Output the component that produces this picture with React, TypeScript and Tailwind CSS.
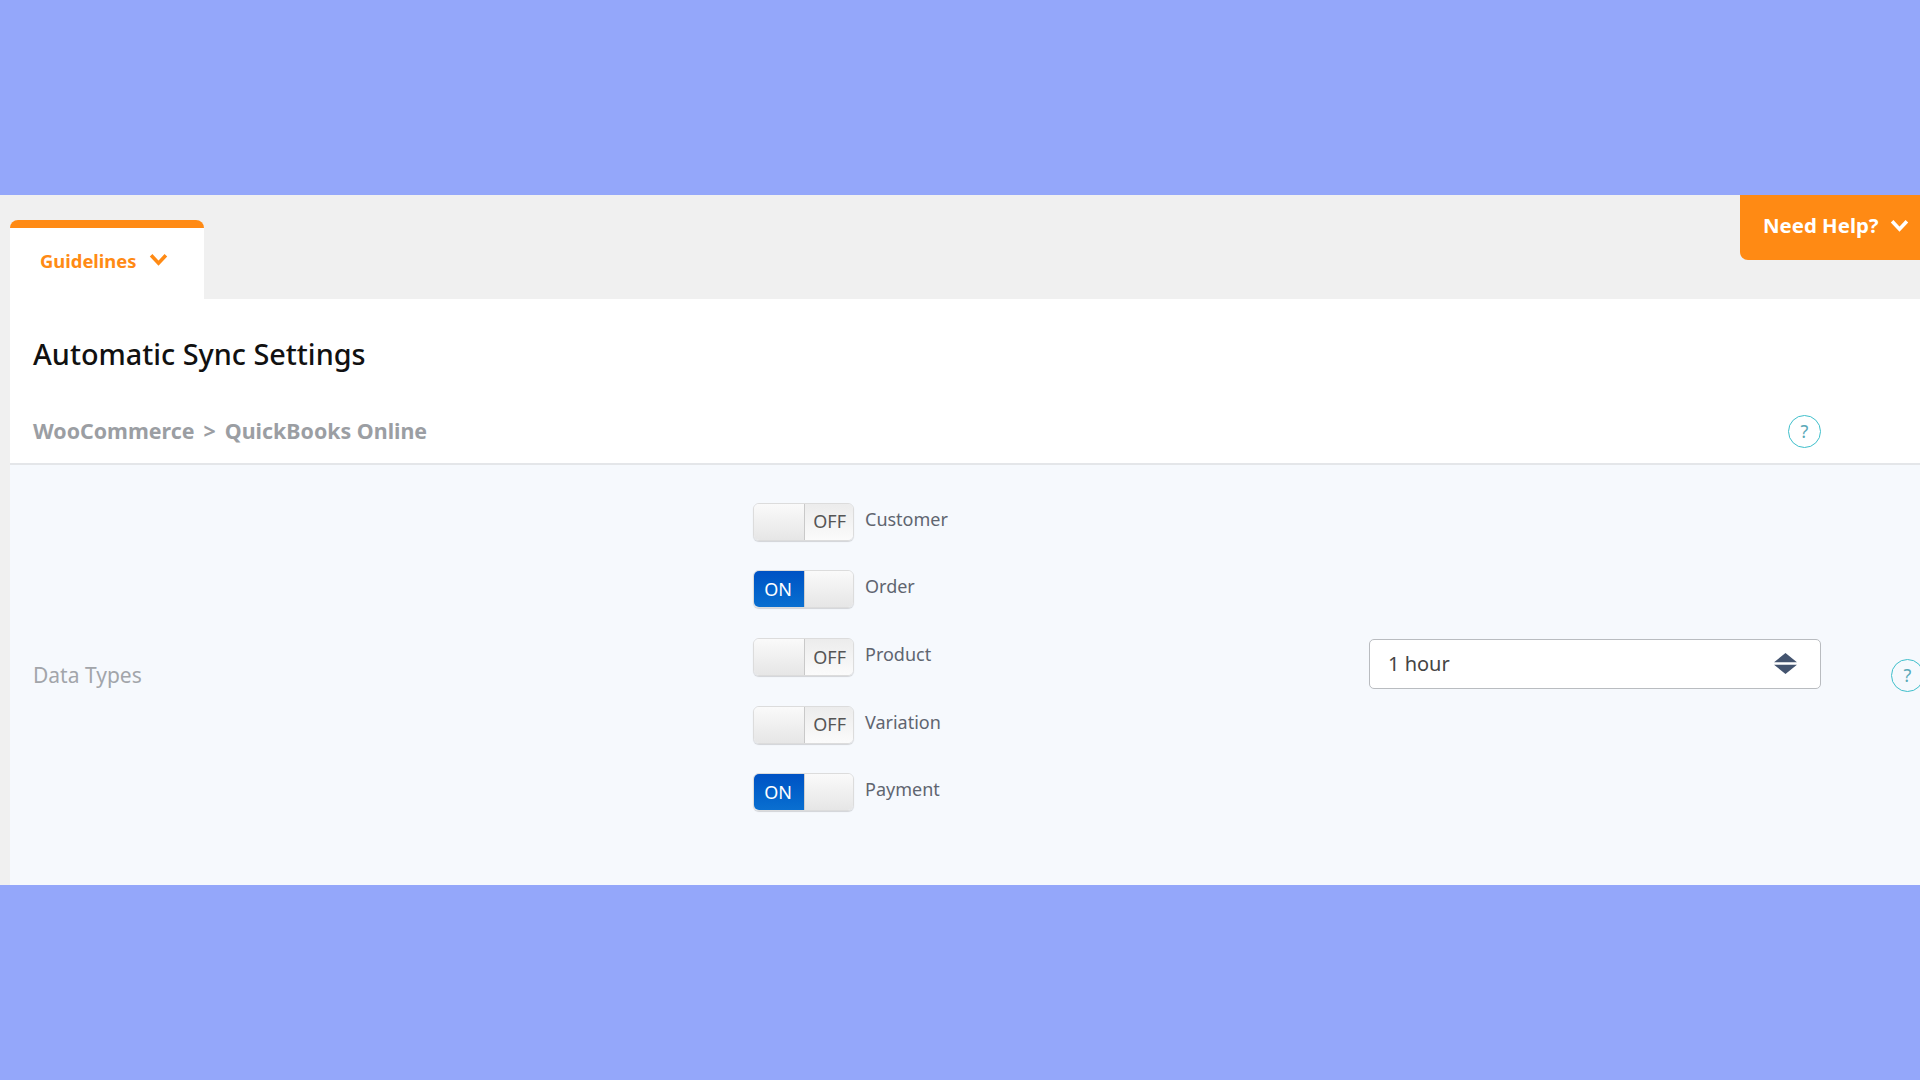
const F = "font-['Noto_Sans','Open_Sans',sans-serif]";

function Chevron({ className }: { className: string }) {
  return (
    <svg viewBox="0 0 18 12" className={className} fill="none" stroke="currentColor" strokeWidth="3.4">
      <path d="M2 2l7 7.5L16 2" />
    </svg>
  );
}

function Help({ className }: { className?: string }) {
  return (
    <div className={`flex h-[33px] w-[33px] shrink-0 items-center justify-center rounded-full border-[1.5px] border-[#3fbfcb] bg-transparent text-[18px] text-[#5aa9b8] ${className ?? ""}`}>
      ?
    </div>
  );
}

function Toggle({ on, label }: { on: boolean; label: string }) {
  return (
    <div className="flex h-[38px] items-start">
      <div className="flex h-[38px] w-[101px] overflow-hidden rounded-[6px] border border-[#dcdcdc] shadow-[0_1px_1px_rgba(0,0,0,0.15)]">
        {on ? (
          <>
            <div className="flex w-[50px] items-center justify-center bg-gradient-to-b from-[#0052c4] to-[#0a6fd0] pr-[2px] text-[18px] text-white">ON</div>
            <div className="flex-1 border-l border-[#cfcfcf] bg-gradient-to-b from-[#fafafa] to-[#e6e6e6]" />
          </>
        ) : (
          <>
            <div className="w-[51px] border-r border-[#c9c9c9] bg-gradient-to-b from-[#fafafa] to-[#e6e6e6]" />
            <div className="flex flex-1 items-center justify-end bg-gradient-to-b from-[#ececec] to-[#fbfbfb] pr-[7px] text-[18px] text-[#555]">OFF</div>
          </>
        )}
      </div>
      <span className="ml-[11px] text-[18px] leading-[33px] text-[#5f6570]">{label}</span>
    </div>
  );
}

export default function App() {
  return (
    <div className={`${F} flex h-[1080px] w-[1920px] flex-col overflow-hidden bg-[#94a7fa]`}>
      <div className="h-[195px] shrink-0" />
      <div className="flex h-[690px] shrink-0 flex-col bg-[#f0f0f0] pl-[10px]">
        <div className="flex h-[104px] shrink-0 items-start justify-between">
          <div className="mt-[25px] h-[79px] w-[194px] rounded-t-[8px] border-t-[8px] border-[#ff8a14] bg-white pl-[30px]">
            <div className="flex h-[66px] items-center text-[#ff8a14]">
              <span className="text-[18.4px] font-bold">Guidelines</span>
              <Chevron className="mb-[3px] ml-[12px] h-[13px] w-[19px]" />
            </div>
          </div>
          <div className="flex h-[65px] w-[180px] items-center rounded-bl-[8px] bg-[#ff8a14] pb-[5px] pl-[23px] text-white">
            <span className="text-[20.4px] font-bold whitespace-nowrap">Need Help?</span>
            <Chevron className="ml-[11px] h-[13px] w-[19px] shrink-0" />
          </div>
        </div>
        <div className="flex h-[164px] shrink-0 flex-col bg-white pl-[23px]">
          <h1 className="mt-[33px] text-[28.8px] leading-[44px] font-medium text-[#111]">Automatic Sync Settings</h1>
          <div className="mt-[37px] flex items-center justify-between pr-[99px]">
            <span className="text-[21.4px] leading-[33px] font-bold whitespace-nowrap text-[#9b9ea3]">
              WooCommerce<span className="mx-[9px]">&gt;</span>QuickBooks Online
            </span>
            <Help className="mt-[2px]" />
          </div>
        </div>
        <div className="flex flex-1 items-center border-t-2 border-[#e4e6e9] bg-[#f6f9fd] pl-[23px]">
          <div className="mt-[1px] w-[720px] shrink-0 text-[21px] text-[#a2a5aa]">Data Types</div>
          <div className="mb-[36px] flex w-[616px] shrink-0 flex-col gap-[29.7px]">
            <Toggle on={false} label="Customer" />
            <Toggle on label="Order" />
            <Toggle on={false} label="Product" />
            <Toggle on={false} label="Variation" />
            <Toggle on label="Payment" />
          </div>
          <div className="mb-[22px] flex h-[50px] w-[452px] shrink-0 items-center justify-between rounded-[5px] border border-[#b9bcc0] bg-white pr-[22px] pl-[18px] text-[20px] text-[#444]">
            <span>1 hour</span>
            <svg viewBox="0 0 24 22" className="mb-[1px] h-[21px] w-[25px]" fill="#44546f">
              <path d="M12 0L24 9.7H0zM12 22L0 12.3h24z" />
            </svg>
          </div>
          <Help className="ml-[70px]" />
        </div>
      </div>
    </div>
  );
}
